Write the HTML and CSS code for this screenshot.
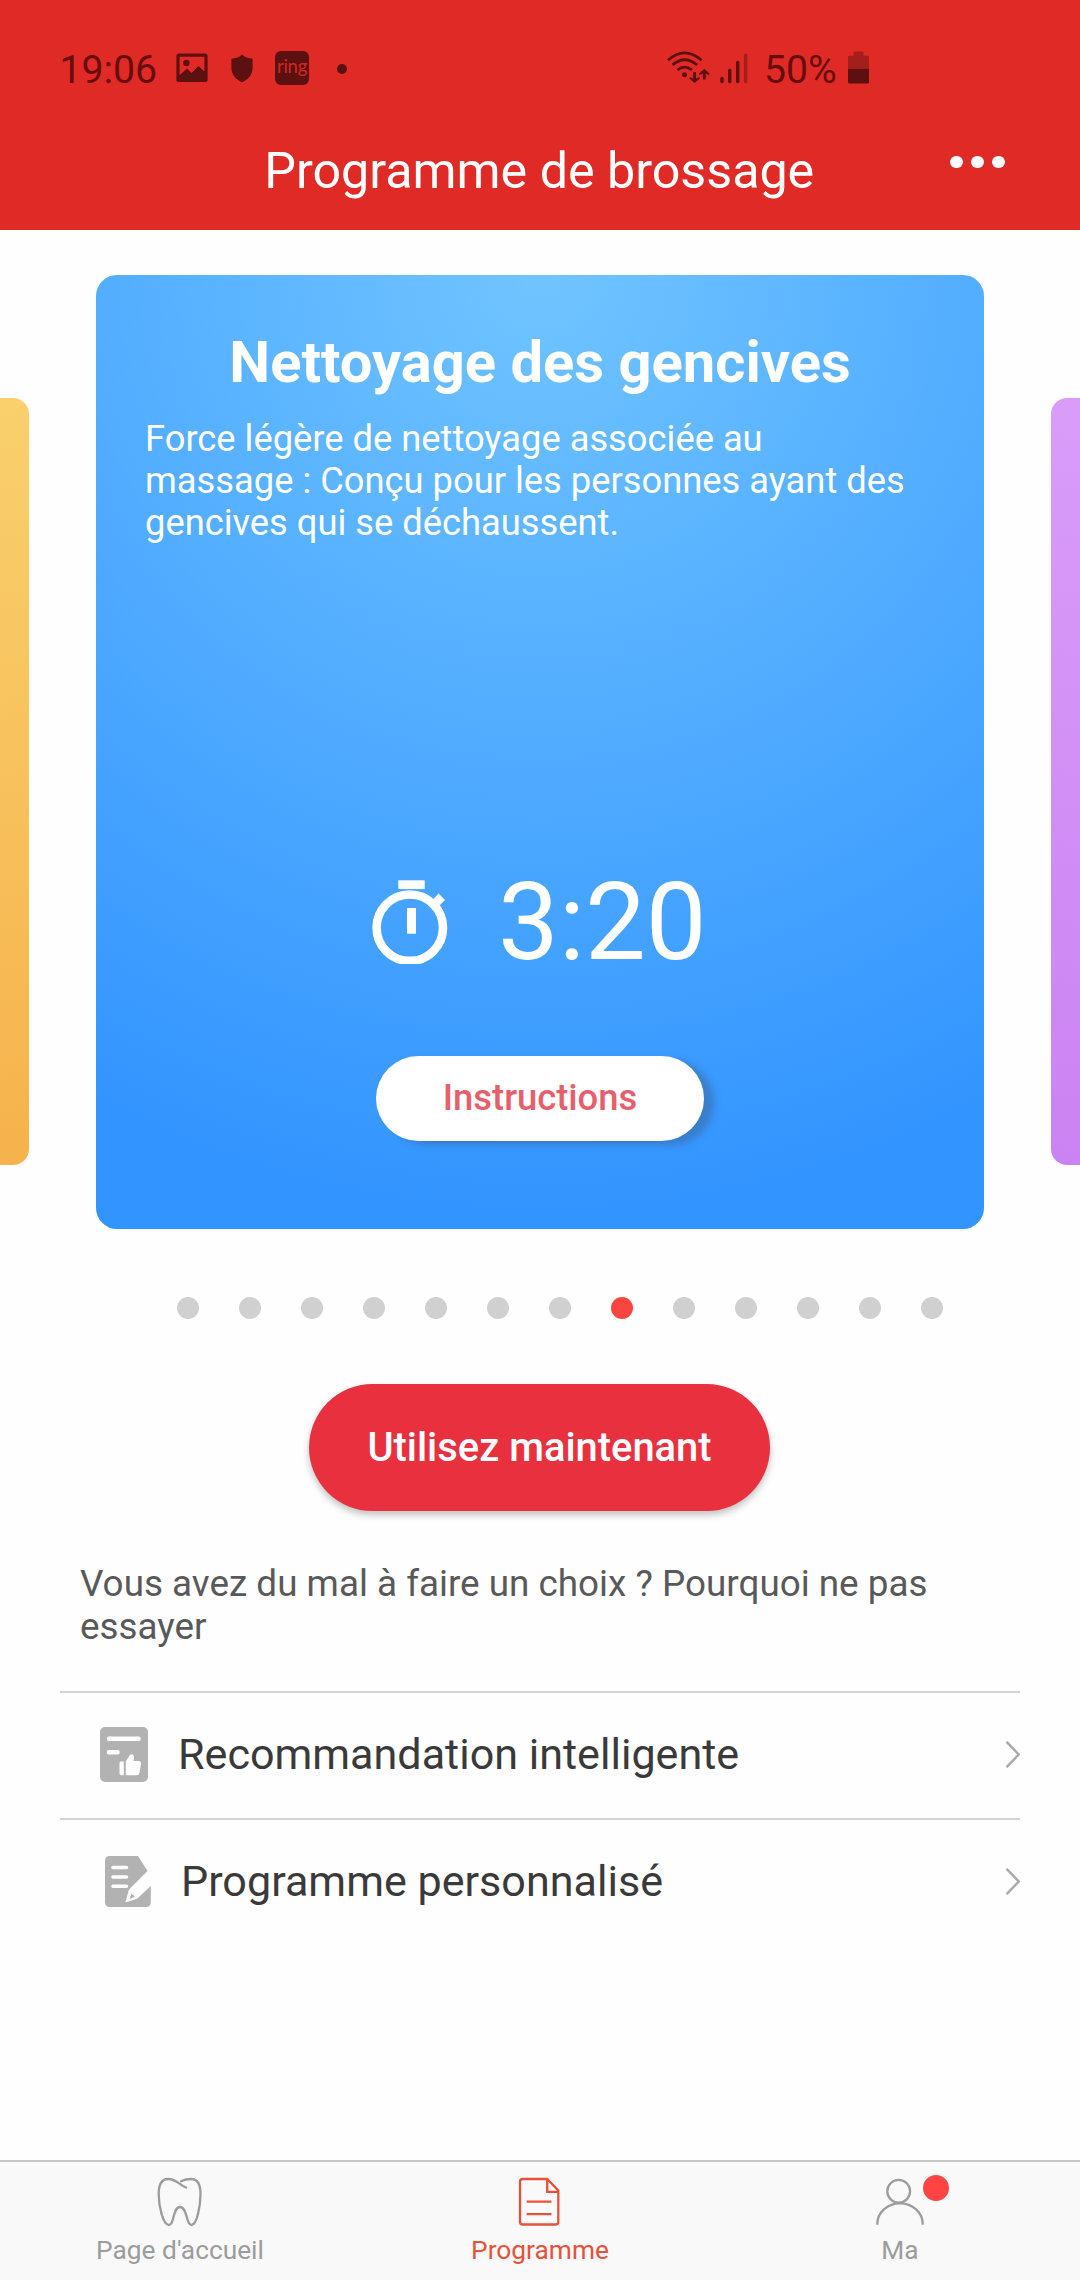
FILE: index.html
```html
<!DOCTYPE html>
<html lang="fr">
<head>
<meta charset="utf-8">
<title>Programme de brossage</title>
<link rel="stylesheet" href="styles.css">
</head>
<body>
<div class="screen">
  <header class="header">
    <div class="status">
      <div class="status-left">
        <span class="clock">19:06</span>
        <svg class="ic-picture" width="32" height="30" viewBox="0 0 32 30"><path fill="currentColor" fill-rule="evenodd" d="M3 0.5H29a2.6 2.6 0 0 1 2.6 2.6V26.4a2.6 2.6 0 0 1-2.6 2.6H3A2.6 2.6 0 0 1 .4 26.4V3.100A2.600 2.600 0 0 1 3 .5ZM3.600 3.700V22.200L11 15.600 15.600 20 22.400 13 28.400 18.600V3.700Z"/><circle cx="10.400" cy="10" r="3.200" fill="currentColor"/></svg>
        <svg class="ic-shield" width="22" height="29" viewBox="0 0 22 29"><path fill="currentColor" d="M11 .5C13.500 3 17 4.300 21.600 4.800V14C21.600 21 17 25.500 11 28.300 5 25.500.400 21 .400 14V4.800C5 4.300 8.500 3 11 .5Z"/></svg>
        <span class="ic-ring">ring</span>
        <span class="ic-more"></span>
      </div>
      <div class="status-right">
        <svg class="ic-wifi" width="43" height="33" viewBox="0 0 43 33" fill="none" stroke="currentColor" stroke-width="2.800"><path d="M1 9.200Q17.500-5.500 34.500 9.200M5.500 14Q17.500 3.500 30.200 14M10.500 19Q17.500 13.200 25 19"/><circle cx="17.500" cy="23.800" r="2.500" fill="currentColor" stroke="none"/><path d="M27.600 21V28.500M37.300 28.500V21"/><path fill="currentColor" stroke="none" d="M22.600 26 27.600 28 32.600 26V27.800L27.600 32 22.600 27.800ZM32.300 24.200 37.300 22 42.300 24.200V22.200L37.300 18 32.300 22.200Z"/></svg>
        <svg class="ic-signal" width="28" height="31" viewBox="0 0 28 31" stroke="currentColor" stroke-width="3.400" stroke-linecap="round"><path d="M2 25.500V28.500M9.700 17.500V28.500M17.700 9.500V28.500"/><path opacity=".45" d="M25.600 2.300V28.500"/></svg>
        <span class="percent">50%</span>
        <svg class="ic-battery" width="21" height="33" viewBox="0 0 21 33"><path opacity=".45" fill="currentColor" d="M5.500 1.500Q5.500.500 6.500.500H14.500Q15.500.500 15.500 1.500V4.800H19.500Q21 4.800 21 6.300V17.800H0V6.300Q0 4.800 1.500 4.800H5.500Z"/><path fill="currentColor" d="M0 17.800H21V31Q21 32.600 19.500 32.600H1.500Q0 32.600 0 31Z"/></svg>
      </div>
    </div>
    <div class="titlebar">
      <h1 class="title">Programme de brossage</h1>
      <div class="menu"><i></i><i></i><i></i></div>
    </div>
  </header>

  <main class="content">
    <section class="carousel">
      <div class="side side-left"></div>
      <article class="card">
        <h2 class="card-title">Nettoyage des gencives</h2>
        <p class="card-text">Force légère de nettoyage associée au<br>massage : Conçu pour les personnes ayant des<br>gencives qui se déchaussent.</p>
        <div class="timer">
          <svg width="76" height="84" viewBox="0 0 76 84" fill="#fff"><rect x="26.300" y=".300" width="26.400" height="8.800"/><rect x="35" y="28" width="9" height="25.700"/><circle cx="37.800" cy="47.700" r="33.200" fill="none" stroke="#fff" stroke-width="8.600"/><path d="M66.600 13.600 73 20 65.500 27.500 59.500 21Z"/></svg>
          <span class="time">3:20</span>
        </div>
        <div class="instructions">Instructions</div>
      </article>
      <div class="side side-right"></div>
    </section>

    <div class="dots"><i></i><i></i><i></i><i></i><i></i><i></i><i></i><i class="on"></i><i></i><i></i><i></i><i></i><i></i></div>

    <div class="use">Utilisez maintenant</div>

    <p class="hint">Vous avez du mal à faire un choix ? Pourquoi ne pas<br>essayer</p>

    <div class="row">
      <svg class="row-icon" width="48" height="55" viewBox="0 0 48 55"><rect width="48" height="55" rx="5" fill="#b2b2b2"/><path d="M9 11.800H38.500M9 25.300H17.500" stroke="#fff" stroke-width="4.600" stroke-linecap="round"/><path fill="#fff" d="M19.500 36Q19.500 34.500 21 34.500H23.800V48.200H21Q19.500 48.200 19.500 46.500ZM25.800 34.500 29.600 28.500Q30.800 26.800 32.600 27.600 34.300 28.500 34 30.500L33.500 34H38.500Q41.200 34.200 41 37L39.400 46Q39 48.200 37 48.200H25.800Z"/></svg>
      <span class="row-label">Recommandation intelligente</span>
      <svg class="chevron" width="14" height="27" viewBox="0 0 14 27"><path d="M.6.8 12.700 13.500.6 26.200" fill="none" stroke="#a9a9a9" stroke-width="2.400"/></svg>
    </div>
    <div class="row row-last">
      <svg class="row-icon" width="46" height="51" viewBox="0 0 46 51"><path fill="#b2b2b2" d="M5 0H33L42.500 15 24 33.500 20.300 46.500 32 42.800 45.800 30V46Q45.800 51 40.800 51H5Q0 51 0 46V5Q0 0 5 0Z"/><path d="M8 11.500H21.500M8 21H21.500M8 30.300H21.500" stroke="#fff" stroke-width="3.600" stroke-linecap="round"/><path fill="#b2b2b2" d="M26.300 37.500 30 40.500 24.800 43Z"/></svg>
      <span class="row-label">Programme personnalisé</span>
      <svg class="chevron" width="14" height="27" viewBox="0 0 14 27"><path d="M.6.8 12.700 13.500.6 26.200" fill="none" stroke="#a9a9a9" stroke-width="2.400"/></svg>
    </div>
  </main>

  <nav class="tabs">
    <div class="tab">
      <svg width="50" height="50" viewBox="0 0 50 50" fill="none" stroke="#9c9c9c" stroke-width="2.300" stroke-linecap="round"><path d="M31.200 10.500C25.200 9 22.200 2 13 2 6 2 3.700 8.500 3.700 17 3.700 28 7.700 48 14 48 19.500 48 17.500 30 25 30 32.500 30 31 48 36.500 48 42 48 45.500 28 45.500 17 45.500 8.500 43 2 36 2 31.500 2 29.500 2.500 26 4.200"/></svg>
      <span>Page d'accueil</span>
    </div>
    <div class="tab active">
      <svg width="50" height="50" viewBox="0 0 50 50" fill="none" stroke="#e9513b" stroke-width="2.300"><path d="M7.800 2H32.200L43.300 13.500V44.700Q43.300 47.500 40.500 47.500H7.800Q5 47.500 5 44.700V4.800Q5 2 7.800 2ZM32.200 2V14.800H43.300M11.600 24.700H36.500M11.600 37.200H36.500"/></svg>
      <span>Programme</span>
    </div>
    <div class="tab">
      <svg width="50" height="50" viewBox="0 0 50 50" fill="none" stroke="#9c9c9c" stroke-width="2.300"><circle cx="23.700" cy="14.300" r="11.400"/><path d="M2.300 47.700V47A22.700 20.700 0 0 1 47.700 47V47.700"/></svg>
      <b class="badge"></b>
      <span>Ma</span>
    </div>
  </nav>
</div>
</body>
</html>
```
FILE: styles.css
```css
* { box-sizing: border-box; margin: 0; padding: 0; }
body { width: 1080px; height: 2280px; overflow: hidden; background: #fefefe; font-family: Roboto, sans-serif; }
svg { display: block; flex: none; }
.screen { display: flex; flex-direction: column; width: 1080px; height: 2280px; overflow: hidden; }

.header { height: 230px; background: #e02a25; }
.status { display: flex; justify-content: space-between; height: 136px; padding: 0 211px 0 59.5px; color: #5c1010; }
.status-left, .status-right { display: flex; align-items: center; height: 136px; }
.clock, .percent { font-size: 39.2px; line-height: 46px; color: #680d0d; padding-top: 3px; }
.clock { width: 116.5px; }
.ic-shield { margin-left: 23px; }
.ic-ring { display: flex; justify-content: center; width: 34px; height: 34px; margin-left: 22px; border-radius: 6px; background: #5c1010; color: #d02723; font-family: Lato, sans-serif; font-size: 18.5px; line-height: 30px; letter-spacing: -0.3px; }
.ic-more { width: 10px; height: 10px; margin-left: 28px; margin-top: 1px; border-radius: 50%; background: #5c1010; }
.ic-signal { margin: 1px 0 0 9.5px; }
.ic-wifi { margin-top: -1px; }
.percent { width: 84px; margin-left: 16.5px; }
.ic-battery { margin-top: -1px; }

.titlebar { display: grid; grid-template-columns: 1fr auto 1fr; height: 94px; padding-right: 75.5px; padding-left: 74px; }
.title { grid-column: 2; font-size: 50.2px; font-weight: 400; line-height: 70px; color: #fff; }
.menu { display: flex; justify-content: flex-end; gap: 8.200px; padding-top: 19.600px; }
.menu i { width: 12.700px; height: 12.700px; border-radius: 50%; background: #fff; }

.content { flex: 1; }
.carousel { display: flex; justify-content: space-between; height: 999px; padding-top: 45px; }
.side { height: 767px; margin-top: 122.5px; }
.side-left { width: 29px; border-radius: 0 16px 16px 0; background: linear-gradient(170deg, #f9d06d, #f6b24c); }
.side-right { width: 29px; border-radius: 16px 0 0 16px; background: linear-gradient(190deg, #d99df9, #cb82f2); }
.card { display: flex; flex-direction: column; align-items: center; width: 888px; height: 954px; border-radius: 21px; background: radial-gradient(circle 940px at 50% 0, #70c4ff, #3294ff); color: #fff; }
.card-title { margin-top: 53px; font-size: 57.900px; font-weight: 700; line-height: 68px; }
.card-text { align-self: flex-start; margin: 21.500px 0 0 49px; font-size: 36.300px; line-height: 42px; }
.timer { display: flex; width: 100%; height: 84px; margin-top: 336.5px; padding-left: 275.500px; }
.time { margin-left: 50.5px; font-size: 108.200px; line-height: 84px; }
.instructions { width: 328px; height: 85px; margin-top: 92px; border-radius: 43px; background: #fff; color: #e6606c; font-size: 36.400px; font-weight: 500; line-height: 84px; text-align: center; box-shadow: 10px 4px 7px rgba(60, 90, 130, .42); }

.dots { display: flex; gap: 40px; padding: 68px 0 0 177px; }
.dots i { width: 22px; height: 22px; border-radius: 50%; background: #d0d0d0; }
.dots .on { background: #fa4440; }

.use { width: 461px; height: 127px; margin: 65px auto 0 309px; border-radius: 64px; background: #e8303e; color: #fff; font-size: 39.900px; font-weight: 500; line-height: 127px; text-align: center; box-shadow: 0 4px 7px rgba(0, 0, 0, .24); }

.hint { height: 180px; padding: 50.500px 0 0 80px; font-size: 36.850px; line-height: 43px; color: #595959; }
.row { display: flex; align-items: center; height: 127px; margin: 0 60px; padding: 0 0 2px 40px; border-top: 2px solid #d4d4d4; }
.row-label { flex: 1; margin-left: 30px; font-size: 43.100px; line-height: 60px; color: #3a3a3a; }
.row-last { padding-left: 45px; }

.tabs { display: flex; height: 120px; border-top: 2px solid #c6c6c6; background: #f9f9f9; color: #9c9c9c; }
.tab { position: relative; flex: 1; display: flex; flex-direction: column; align-items: center; padding-top: 15px; font-size: 26.300px; line-height: 32px; }
.tab span { margin-top: 6.500px; }
.active { color: #e9513b; }
.badge { position: absolute; left: 203px; top: 13px; width: 26px; height: 26px; border-radius: 50%; background: #ff4444; }
```
